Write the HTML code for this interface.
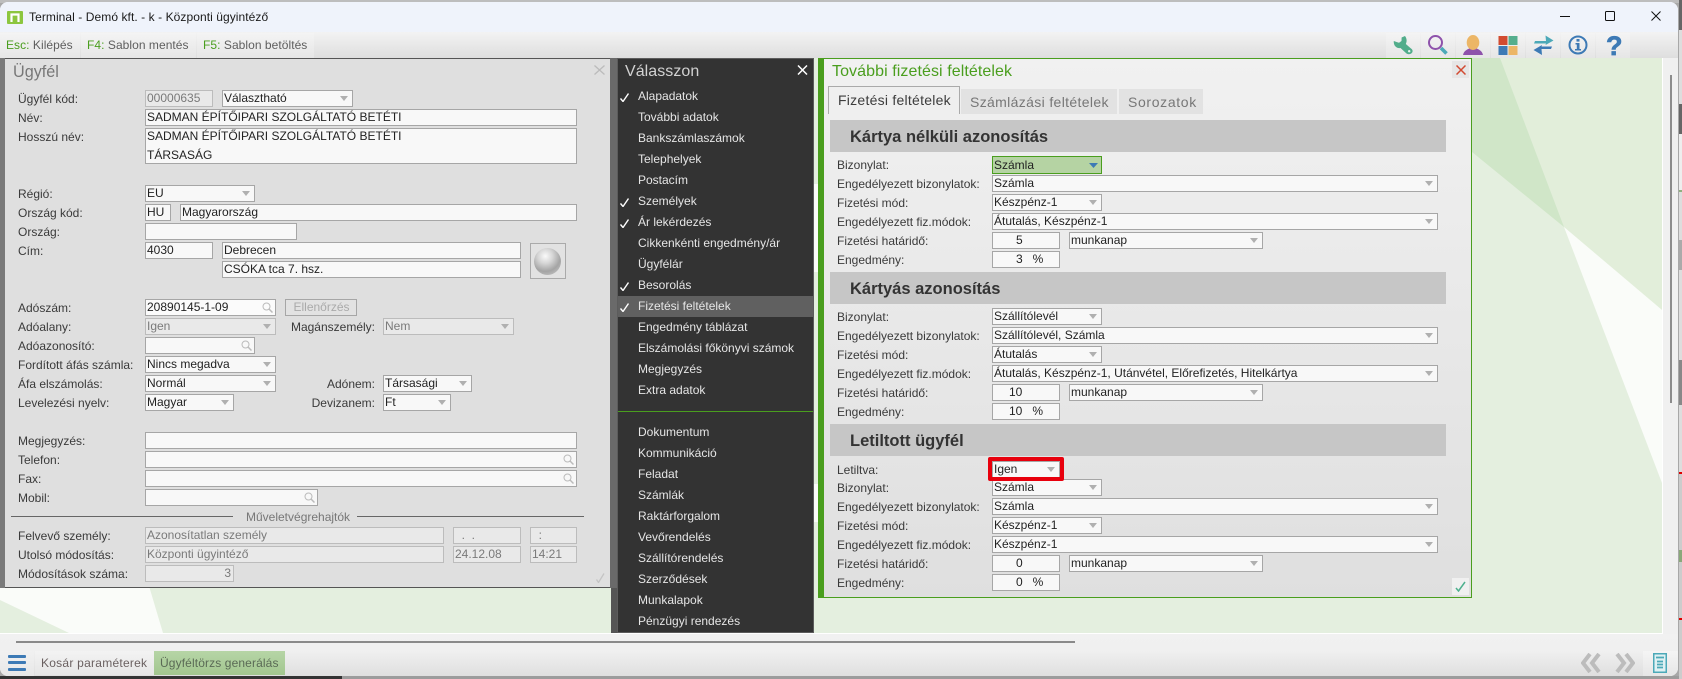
<!DOCTYPE html>
<html lang="hu"><head><meta charset="utf-8"><title>Terminal</title>
<style>
html,body{margin:0;padding:0;width:1682px;height:679px;overflow:hidden;background:#a8a8a8}
body{position:relative;font:12px/17px "Liberation Sans",Arial,sans-serif;color:#333}
.win{position:absolute;left:0;top:2px;width:1678px;height:674px;border-radius:8px;overflow:hidden;background:#f0f0f0}
.in{position:absolute;left:0;top:-2px;width:1682px;height:679px}
.a{position:absolute;white-space:nowrap}
.t{position:absolute;height:17px;line-height:18px;white-space:nowrap;color:#3a3a3a}
.b{position:absolute;box-sizing:border-box;height:17px;border:1px solid #a6a6a6;background:#f8f8f8;padding-left:1px;line-height:15px;color:#222;white-space:nowrap;overflow:hidden}
.d{background:#e9e9e9;border-color:#bcbcbc;color:#7a7a7a}
.s::after{content:"";position:absolute;right:4px;top:5px;border-left:4px solid transparent;border-right:4px solid transparent;border-top:5px solid #b0b0b0}
.r{text-align:right;padding-right:2px}
.m{position:absolute;left:638px;height:21px;line-height:21px;color:#e6e6e6;white-space:nowrap}
.ck{position:absolute;left:620px;width:9px;height:9px}
.h{position:absolute;left:830px;width:616px;height:32px;background:#c6c6c6;font:bold 16.5px/35px "Liberation Sans",Arial,sans-serif;color:#333;padding-left:20px;box-sizing:border-box}
.c{position:absolute;top:33px;height:25px;width:34px;background:linear-gradient(#f4f4f4,#e6e6e6)}
.lt{position:absolute;top:33px;height:25px;line-height:25px;background:linear-gradient(#f4f4f4,#e6e6e6);color:#5e5e5e;white-space:nowrap;padding-left:6px;box-sizing:border-box;letter-spacing:.05px}
.lt b{font-weight:normal;color:#4a9e1e}
.mg{position:absolute;right:2px;top:2px;width:11px;height:11px}
svg{display:block}
</style></head><body>
<div class="a" style="left:0;top:0;width:1682px;height:3px;background:#bdbdbd"></div>
<div class="a" style="left:1679px;top:0;width:3px;height:679px;background:linear-gradient(#666 0 30px,#ddd 30px 104px,#666 104px 134px,#eee 134px 190px,#8fb07f 190px 192px,#ddd 192px 240px,#aaa 240px 270px,#ddd 270px 360px,#888 360px 405px,#ddd 405px 472px,#d00 472px 474px,#ccc 474px 550px,#8aa87a 550px 562px,#ccc 562px 618px,#d00 618px 620px,#ccc 620px)"></div>
<div class="a" style="left:0;top:676px;width:342px;height:3px;background:#333;overflow:hidden"><span class="a" style="left:14px;top:1px;color:#eee;line-height:17px">Sharp Point listák</span></div>
<div class="a" style="left:342px;top:676px;width:1337px;height:3px;background:#9c9c9c;overflow:hidden"><span class="a" style="left:30px;top:0;color:#222;line-height:17px">Németh László</span></div>
<div class="win"><div class="in">

<!-- title bar -->
<div class="a" style="left:0;top:0;width:1682px;height:32px;background:#eff3fb"></div>
<svg class="a" style="left:7px;top:11px" width="16" height="13" viewBox="0 0 16 13"><rect width="16" height="13" rx="1" fill="#8cc63f"/><path d="M4.500 11V3.500H11.500V11" fill="none" stroke="#fff" stroke-width="2.200"/></svg>
<div class="a" style="left:29px;top:9px;color:#1a1a1a;letter-spacing:.07px">Terminal - Demó kft. - k - Központi ügyintéző</div>
<svg class="a" style="left:1555px;top:8px" width="115" height="16" viewBox="0 0 115 16"><path d="M5 8.500H15" stroke="#111" stroke-width="1"/><rect x="50.500" y="3.500" width="9" height="9" rx="1" fill="none" stroke="#111"/><path d="M96.500 3.500L105.500 12.500M105.500 3.500L96.500 12.500" stroke="#111" fill="none"/></svg>

<!-- toolbar -->
<div class="a" style="left:0;top:32px;width:1682px;height:26px;background:linear-gradient(#f3f3f3,#dedede)"></div>
<div class="lt" style="left:0;width:80px"><b>Esc:</b> Kilépés</div>
<div class="lt" style="left:81px;width:115px"><b>F4:</b> Sablon mentés</div>
<div class="lt" style="left:197px;width:117px"><b>F5:</b> Sablon betöltés</div>
<div class="c" style="left:1386px"></div><div class="c" style="left:1421px"></div><div class="c" style="left:1456px"></div><div class="c" style="left:1491px"></div><div class="c" style="left:1526px"></div><div class="c" style="left:1561px"></div><div class="c" style="left:1596px"></div>
<svg class="a" style="left:1393px;top:35px" width="20" height="20" viewBox="0 0 20 20"><path d="M12 1C14 3.500 14 6.500 12.800 9L18 13.500C19 14 19.600 15 19.600 16C19.600 19 15.500 20 13.500 18.500L7.500 13C3.500 13.800 .3 10.500 .8 6L6 7.800L8.500 6L8.600 2.500Z" fill="#52ad8b"/><circle cx="16.200" cy="16.200" r="1.200" fill="#e8f5f0"/></svg>
<svg class="a" style="left:1428px;top:35px" width="20" height="20" viewBox="0 0 20 20"><circle cx="7.500" cy="7.500" r="6.500" fill="none" stroke="#8e52ab" stroke-width="2"/><path d="M13 13L18.500 18.500" stroke="#4ca9b8" stroke-width="3.600"/></svg>
<svg class="a" style="left:1463px;top:35px" width="20" height="20" viewBox="0 0 20 20"><path d="M0 20C1 15 5 14.500 7 13L13 13C15 14.500 19 15 20 20Z" fill="#8e52ab"/><ellipse cx="10" cy="7.500" rx="6.300" ry="7.500" fill="#ecb666"/></svg>
<svg class="a" style="left:1498px;top:35px" width="20" height="20" viewBox="0 0 20 20"><rect x=".5" y="1" width="9" height="9" fill="#d14b2f"/><rect x="10.500" y="1" width="9" height="9" fill="#55ae8d"/><rect x=".5" y="11" width="9" height="9" fill="#3d7ab5"/><rect x="10.500" y="11" width="9" height="9" fill="#ecb666"/></svg>
<svg class="a" style="left:1533px;top:35px" width="21" height="20" viewBox="0 0 21 20"><path d="M2 6H13L12.500 .5L20.500 5.500L12.500 10L13 8.500H1Z" fill="#4ca9b8"/><path d="M19 11.500H8.500L9 10L.5 15L9 20L8.500 14H18Z" fill="#3d7ab5"/></svg>
<svg class="a" style="left:1568px;top:35px" width="20" height="20" viewBox="0 0 20 20"><circle cx="10" cy="10" r="8.500" fill="none" stroke="#3d7ab5" stroke-width="2"/><rect x="8.500" y="4" width="3" height="2.600" fill="#3d7ab5"/><path d="M7.500 8H11.500V14H13V15.500H7V14H8.800V9.500H7.500Z" fill="#3d7ab5"/></svg>
<div class="a" style="left:1606px;top:33px;font:bold 27px/27px 'Liberation Sans',Arial,sans-serif;color:#3d7ab5;-webkit-text-stroke:.7px #3d7ab5">?</div>

<!-- main bg -->
<svg class="a" style="left:0;top:58px" width="1663" height="576" viewBox="0 58 1663 576">
<rect x="0" y="58" width="1662" height="575" fill="#e4efdf"/>
<polygon points="1500,58 1662,58 1662,310 1564,227" fill="#e2eeda"/>
<polygon points="1472,58 1500,58 1564,227 1472,152" fill="#d0e6c8"/>
<polygon points="1564,227 1662,310 1662,483" fill="#fafcf9"/>
<polygon points="0,586 149,586 163,633 69,633 0,600" fill="#fafcf9"/>
<rect x="814" y="184" width="4" height="88" fill="#fafcf9"/>
<rect x="814" y="484" width="4" height="38" fill="#fafcf9"/>
<rect x="1662" y="58" width="1" height="575" fill="#fff"/>
<rect x="0" y="633" width="1663" height="1" fill="#fff"/>
</svg>
<div class="a" style="left:1670px;top:75px;width:2px;height:328px;background:#8c8c8c"></div>

<!-- left panel -->
<div class="a" style="left:0;top:58px;width:5px;height:530px;background:#7a7a7a"></div>
<div class="a" style="left:610px;top:58px;width:7px;height:530px;background:#6a6a6a"></div>
<div class="a" style="left:611px;top:588px;width:6px;height:45px;background:#555"></div>
<div class="a" style="left:5px;top:58px;width:605px;height:530px;box-sizing:border-box;background:#dfdfdf;border-top:1px solid #555;border-bottom:1px solid #555"></div>
<div class="a" style="left:13px;top:63px;font-size:16.200px;line-height:18px;color:#777">Ügyfél</div>
<svg class="a" style="left:594px;top:65px" width="11" height="10" viewBox="0 0 11 10"><path d="M.5 .5L10.500 9.500M10.500 .5L.5 9.500" stroke="#bbb" stroke-width="1.300"/></svg>

<div class="t" style="left:18px;top:90px">Ügyfél kód:</div>
<div class="b d" style="left:145px;top:90px;width:68px">00000635</div>
<div class="b s" style="left:222px;top:90px;width:131px">Választható</div>
<div class="t" style="left:18px;top:109px">Név:</div>
<div class="b" style="left:145px;top:109px;width:432px">SADMAN ÉPÍTŐIPARI SZOLGÁLTATÓ BETÉTI</div>
<div class="t" style="left:18px;top:128px">Hosszú név:</div>
<div class="b" style="left:145px;top:128px;width:432px;height:36px;line-height:19px;white-space:normal"><div style="margin-top:-2px">SADMAN ÉPÍTŐIPARI SZOLGÁLTATÓ BETÉTI<br>TÁRSASÁG</div></div>
<div class="t" style="left:18px;top:185px">Régió:</div>
<div class="b s" style="left:145px;top:185px;width:110px">EU</div>
<div class="t" style="left:18px;top:204px">Ország kód:</div>
<div class="b" style="left:145px;top:204px;width:26px">HU</div>
<div class="b" style="left:180px;top:204px;width:397px">Magyarország</div>
<div class="t" style="left:18px;top:223px">Ország:</div>
<div class="b" style="left:145px;top:223px;width:152px"></div>
<div class="t" style="left:18px;top:242px">Cím:</div>
<div class="b" style="left:145px;top:242px;width:68px">4030</div>
<div class="b" style="left:222px;top:242px;width:299px">Debrecen</div>
<div class="b" style="left:222px;top:261px;width:299px">CSÓKA tca 7. hsz.</div>
<div class="a" style="left:530px;top:243px;width:36px;height:36px;box-sizing:border-box;border:1px solid #aaa;background:#e2e2e2"></div>
<div class="a" style="left:534px;top:248px;width:27px;height:27px;border-radius:50%;background:radial-gradient(circle at 42% 30%,#fafafa 0,#d6d6d6 30%,#a4a4a4 62%,#d0d0d0 100%)"></div>

<div class="t" style="left:18px;top:299px">Adószám:</div>
<div class="b" style="left:145px;top:299px;width:131px;background:#fbfbfb">20890145-1-09<svg class="mg" viewBox="0 0 11 11"><circle cx="4.500" cy="4.500" r="3.500" fill="none" stroke="#bbb"/><path d="M7 7L10.500 10.500" stroke="#bbb" stroke-width="1.500"/></svg></div>
<div class="b" style="left:285px;top:299px;width:72px;background:#e2e2e2;color:#aaa;text-align:center">Ellenőrzés</div>
<div class="t" style="left:18px;top:318px">Adóalany:</div>
<div class="b d s" style="left:145px;top:318px;width:131px">Igen</div>
<div class="t" style="right:1307px;top:318px">Magánszemély:</div>
<div class="b d s" style="left:383px;top:318px;width:131px">Nem</div>
<div class="t" style="left:18px;top:337px">Adóazonosító:</div>
<div class="b" style="left:145px;top:337px;width:110px"><svg class="mg" viewBox="0 0 11 11"><circle cx="4.500" cy="4.500" r="3.500" fill="none" stroke="#bbb"/><path d="M7 7L10.500 10.500" stroke="#bbb" stroke-width="1.500"/></svg></div>
<div class="t" style="left:18px;top:356px">Fordított áfás számla:</div>
<div class="b s" style="left:145px;top:356px;width:131px">Nincs megadva</div>
<div class="t" style="left:18px;top:375px">Áfa elszámolás:</div>
<div class="b s" style="left:145px;top:375px;width:131px">Normál</div>
<div class="t" style="right:1307px;top:375px">Adónem:</div>
<div class="b s" style="left:383px;top:375px;width:89px">Társasági</div>
<div class="t" style="left:18px;top:394px">Levelezési nyelv:</div>
<div class="b s" style="left:145px;top:394px;width:89px">Magyar</div>
<div class="t" style="right:1307px;top:394px">Devizanem:</div>
<div class="b s" style="left:383px;top:394px;width:68px">Ft</div>
<div class="t" style="left:18px;top:432px">Megjegyzés:</div>
<div class="b" style="left:145px;top:432px;width:432px"></div>
<div class="t" style="left:18px;top:451px">Telefon:</div>
<div class="b" style="left:145px;top:451px;width:432px"><svg class="mg" viewBox="0 0 11 11"><circle cx="4.500" cy="4.500" r="3.500" fill="none" stroke="#bbb"/><path d="M7 7L10.500 10.500" stroke="#bbb" stroke-width="1.500"/></svg></div>
<div class="t" style="left:18px;top:470px">Fax:</div>
<div class="b" style="left:145px;top:470px;width:432px"><svg class="mg" viewBox="0 0 11 11"><circle cx="4.500" cy="4.500" r="3.500" fill="none" stroke="#bbb"/><path d="M7 7L10.500 10.500" stroke="#bbb" stroke-width="1.500"/></svg></div>
<div class="t" style="left:18px;top:489px">Mobil:</div>
<div class="b" style="left:145px;top:489px;width:173px"><svg class="mg" viewBox="0 0 11 11"><circle cx="4.500" cy="4.500" r="3.500" fill="none" stroke="#bbb"/><path d="M7 7L10.500 10.500" stroke="#bbb" stroke-width="1.500"/></svg></div>
<div class="a" style="left:11px;top:516px;width:222px;height:1px;background:#666"></div>
<div class="t" style="left:246px;top:508px;color:#777">Műveletvégrehajtók</div>
<div class="a" style="left:357px;top:516px;width:227px;height:1px;background:#666"></div>
<div class="t" style="left:18px;top:527px">Felvevő személy:</div>
<div class="b d" style="left:145px;top:527px;width:299px">Azonosítatlan személy</div>
<div class="b d" style="left:453px;top:527px;width:68px">&nbsp;&nbsp;.&nbsp;&nbsp;.</div>
<div class="b d" style="left:530px;top:527px;width:47px">&nbsp;&nbsp;:</div>
<div class="t" style="left:18px;top:546px">Utolsó módosítás:</div>
<div class="b d" style="left:145px;top:546px;width:299px">Központi ügyintéző</div>
<div class="b d" style="left:453px;top:546px;width:68px">24.12.08</div>
<div class="b d" style="left:530px;top:546px;width:47px">14:21</div>
<div class="t" style="left:18px;top:565px">Módosítások száma:</div>
<div class="b d r" style="left:145px;top:565px;width:89px">3</div>
<svg class="a" style="left:595px;top:573px" width="10" height="10" viewBox="0 0 10 10"><path d="M1.500 6.500L3.500 9.500L9 .5" fill="none" stroke="#c4c4c4" stroke-width="1.300"/></svg>

<!-- menu -->
<div class="a" style="left:617px;top:58px;width:197px;height:575px;box-sizing:border-box;background:#333;border:1px solid #5c5c5c"></div>
<div class="a" style="left:625px;top:63px;font-size:16px;line-height:18px;color:#d2d2d2;letter-spacing:.05px">Válasszon</div>
<svg class="a" style="left:797px;top:65px" width="11" height="10" viewBox="0 0 11 10"><path d="M1 .5L10 9.500M10 .5L1 9.500" stroke="#fff" stroke-width="1.500"/></svg>
<div class="a" style="left:618px;top:296px;width:195px;height:21px;background:#606060"></div>
<div class="m" style="top:86px">Alapadatok</div>
<div class="m" style="top:107px">További adatok</div>
<div class="m" style="top:128px">Bankszámlaszámok</div>
<div class="m" style="top:149px">Telephelyek</div>
<div class="m" style="top:170px">Postacím</div>
<div class="m" style="top:191px">Személyek</div>
<div class="m" style="top:212px">Ár lekérdezés</div>
<div class="m" style="top:233px">Cikkenkénti engedmény/ár</div>
<div class="m" style="top:254px">Ügyfélár</div>
<div class="m" style="top:275px">Besorolás</div>
<div class="m" style="top:296px">Fizetési feltételek</div>
<div class="m" style="top:317px">Engedmény táblázat</div>
<div class="m" style="top:338px">Elszámolási főkönyvi számok</div>
<div class="m" style="top:359px">Megjegyzés</div>
<div class="m" style="top:380px">Extra adatok</div>
<div class="a" style="left:618px;top:411px;width:195px;height:1px;background:#4a9e1e"></div>
<div class="m" style="top:422px">Dokumentum</div>
<div class="m" style="top:443px">Kommunikáció</div>
<div class="m" style="top:464px">Feladat</div>
<div class="m" style="top:485px">Számlák</div>
<div class="m" style="top:506px">Raktárforgalom</div>
<div class="m" style="top:527px">Vevőrendelés</div>
<div class="m" style="top:548px">Szállítórendelés</div>
<div class="m" style="top:569px">Szerződések</div>
<div class="m" style="top:590px">Munkalapok</div>
<div class="m" style="top:611px">Pénzügyi rendezés</div>
<svg class="ck" style="top:93px" viewBox="0 0 9 9"><path d="M.5 5.500L3 8.500L8.500 .5" fill="none" stroke="#fff" stroke-width="1.400"/></svg>
<svg class="ck" style="top:198px" viewBox="0 0 9 9"><path d="M.5 5.500L3 8.500L8.500 .5" fill="none" stroke="#fff" stroke-width="1.400"/></svg>
<svg class="ck" style="top:219px" viewBox="0 0 9 9"><path d="M.5 5.500L3 8.500L8.500 .5" fill="none" stroke="#fff" stroke-width="1.400"/></svg>
<svg class="ck" style="top:282px" viewBox="0 0 9 9"><path d="M.5 5.500L3 8.500L8.500 .5" fill="none" stroke="#fff" stroke-width="1.400"/></svg>
<svg class="ck" style="top:303px" viewBox="0 0 9 9"><path d="M.5 5.500L3 8.500L8.500 .5" fill="none" stroke="#fff" stroke-width="1.400"/></svg>

<!-- right panel -->
<div class="a" style="left:818px;top:58px;width:654px;height:540px;box-sizing:border-box;background:linear-gradient(#f1f1f1,#dfdfdf);border:1px solid #4a9e1e;border-left:6px solid #4a9e1e"></div>
<div class="a" style="left:832px;top:63px;font-size:16px;line-height:18px;color:#4a9e1e;letter-spacing:.08px">További fizetési feltételek</div>
<div class="a" style="left:1452px;top:61px;width:17px;height:17px;background:#e6e6e6"></div>
<svg class="a" style="left:1456px;top:65px" width="10" height="10" viewBox="0 0 10 10"><path d="M.5 .5L9.500 9.500M9.500 .5L.5 9.500" stroke="#d24a32" stroke-width="1.500"/></svg>
<div class="a" style="left:828px;top:86px;width:132px;height:28px;box-sizing:border-box;border:1px solid #aaa;border-bottom:0;background:#efefef;font-size:14px;line-height:27px;color:#3c3c3c;padding-left:9px;letter-spacing:.25px">Fizetési feltételek</div>
<div class="a" style="left:961px;top:89px;width:156px;height:25px;background:#e2e2e2;font-size:14px;line-height:26px;color:#777;padding-left:9px;box-sizing:border-box;letter-spacing:.35px">Számlázási feltételek</div>
<div class="a" style="left:1119px;top:89px;width:84px;height:25px;background:#e2e2e2;font-size:14px;line-height:26px;color:#777;padding-left:9px;box-sizing:border-box;letter-spacing:.65px">Sorozatok</div>

<div class="h" style="top:120px">Kártya nélküli azonosítás</div>
<div class="t" style="left:837px;top:156px">Bizonylat:</div>
<div class="b" style="left:992px;top:156px;width:110px;height:18px;background:#b5d3a3;border-color:#4a9e1e;line-height:16px">Számla</div>
<svg class="a" style="left:1089px;top:163px" width="9" height="5" viewBox="0 0 9 5"><path d="M0 0H9L4.500 5Z" fill="#3d7ab5"/></svg>
<div class="t" style="left:837px;top:175px">Engedélyezett bizonylatok:</div>
<div class="b s" style="left:992px;top:175px;width:446px">Számla</div>
<div class="t" style="left:837px;top:194px">Fizetési mód:</div>
<div class="b s" style="left:992px;top:194px;width:110px">Készpénz-1</div>
<div class="t" style="left:837px;top:213px">Engedélyezett fiz.módok:</div>
<div class="b s" style="left:992px;top:213px;width:446px">Átutalás, Készpénz-1</div>
<div class="t" style="left:837px;top:232px">Fizetési határidő:</div>
<div class="b" style="left:992px;top:232px;width:68px;padding-left:23px">5</div>
<div class="b s" style="left:1069px;top:232px;width:194px">munkanap</div>
<div class="t" style="left:837px;top:251px">Engedmény:</div>
<div class="b" style="left:992px;top:251px;width:68px;padding-left:23px">3&nbsp;&nbsp;&nbsp;%</div>

<div class="h" style="top:272px">Kártyás azonosítás</div>
<div class="t" style="left:837px;top:308px">Bizonylat:</div>
<div class="b s" style="left:992px;top:308px;width:110px">Szállítólevél</div>
<div class="t" style="left:837px;top:327px">Engedélyezett bizonylatok:</div>
<div class="b s" style="left:992px;top:327px;width:446px">Szállítólevél, Számla</div>
<div class="t" style="left:837px;top:346px">Fizetési mód:</div>
<div class="b s" style="left:992px;top:346px;width:110px">Átutalás</div>
<div class="t" style="left:837px;top:365px">Engedélyezett fiz.módok:</div>
<div class="b s" style="left:992px;top:365px;width:446px">Átutalás, Készpénz-1, Utánvétel, Előrefizetés, Hitelkártya</div>
<div class="t" style="left:837px;top:384px">Fizetési határidő:</div>
<div class="b" style="left:992px;top:384px;width:68px;padding-left:16px">10</div>
<div class="b s" style="left:1069px;top:384px;width:194px">munkanap</div>
<div class="t" style="left:837px;top:403px">Engedmény:</div>
<div class="b" style="left:992px;top:403px;width:68px;padding-left:16px">10&nbsp;&nbsp;&nbsp;%</div>

<div class="h" style="top:424px">Letiltott ügyfél</div>
<div class="t" style="left:837px;top:461px">Letiltva:</div>
<div class="t" style="left:837px;top:479px">Bizonylat:</div>
<div class="b s" style="left:992px;top:479px;width:110px">Számla</div>
<div class="b s" style="left:992px;top:461px;width:68px">Igen</div>
<div class="a" style="left:988px;top:457px;width:76px;height:24px;box-sizing:border-box;border:4px solid #e8000d;border-radius:2px"></div>
<div class="t" style="left:837px;top:498px">Engedélyezett bizonylatok:</div>
<div class="b s" style="left:992px;top:498px;width:446px">Számla</div>
<div class="t" style="left:837px;top:517px">Fizetési mód:</div>
<div class="b s" style="left:992px;top:517px;width:110px">Készpénz-1</div>
<div class="t" style="left:837px;top:536px">Engedélyezett fiz.módok:</div>
<div class="b s" style="left:992px;top:536px;width:446px">Készpénz-1</div>
<div class="t" style="left:837px;top:555px">Fizetési határidő:</div>
<div class="b" style="left:992px;top:555px;width:68px;padding-left:23px">0</div>
<div class="b s" style="left:1069px;top:555px;width:194px">munkanap</div>
<div class="t" style="left:837px;top:574px">Engedmény:</div>
<div class="b" style="left:992px;top:574px;width:68px;padding-left:23px">0&nbsp;&nbsp;&nbsp;%</div>
<div class="a" style="left:1452px;top:578px;width:17px;height:17px;background:#f0f0f0"></div>
<svg class="a" style="left:1455px;top:581px" width="11" height="11" viewBox="0 0 11 11"><path d="M1 7L3.500 10L10 1" fill="none" stroke="#4eb08e" stroke-width="1.500"/></svg>

<!-- bottom bar -->
<div class="a" style="left:0;top:634px;width:1682px;height:42px;background:linear-gradient(#f1f1f1 0,#f0f0f0 40%,#dfdfdf 100%)"></div>
<div class="a" style="left:16px;top:641px;width:1059px;height:2px;background:#8a8a8a"></div>
<div class="a" style="left:0;top:651px;width:34px;height:25px;background:linear-gradient(#f1f1f1,#e8e8e8)"></div>
<div class="a" style="left:8px;top:655px;width:18px;height:3px;border-radius:1px;background:#3d7ab5"></div>
<div class="a" style="left:8px;top:661px;width:18px;height:3px;border-radius:1px;background:#3d7ab5"></div>
<div class="a" style="left:8px;top:668px;width:18px;height:3px;border-radius:1px;background:#3d7ab5"></div>
<div class="a" style="left:35px;top:651px;width:119px;height:24px;background:linear-gradient(#f3f3f3,#e6e6e6);line-height:24px;padding-left:6px;box-sizing:border-box;color:#6a6060;letter-spacing:.25px">Kosár paraméterek</div>
<div class="a" style="left:154px;top:651px;width:131px;height:24px;background:linear-gradient(#b6d5a6,#a2c68f);line-height:24px;padding-left:6px;box-sizing:border-box;color:#5a6a55;letter-spacing:.12px">Ügyféltörzs generálás</div>
<svg class="a" style="left:1581px;top:653px" width="54" height="20" viewBox="0 0 54 20"><path d="M9 1L2 10L9 19M18 1L11 10L18 19M36 1L43 10L36 19M45 1L52 10L45 19" fill="none" stroke="#bcbcbc" stroke-width="4"/></svg>
<div class="a" style="left:1643px;top:651px;width:35px;height:25px;background:linear-gradient(#f5f5f5,#e6e6e6)"></div>
<svg class="a" style="left:1653px;top:653px" width="14" height="20" viewBox="0 0 14 20"><rect width="14" height="20" fill="#4ca9b8"/><rect x="1.500" y="1.500" width="11" height="17" fill="#dff1f3"/><path d="M3 4.500H11M4 8.500H10M4 11.500H10M4 14.500H10" stroke="#4ca9b8" stroke-width="1.800"/></svg>

</div></div>
</body></html>
